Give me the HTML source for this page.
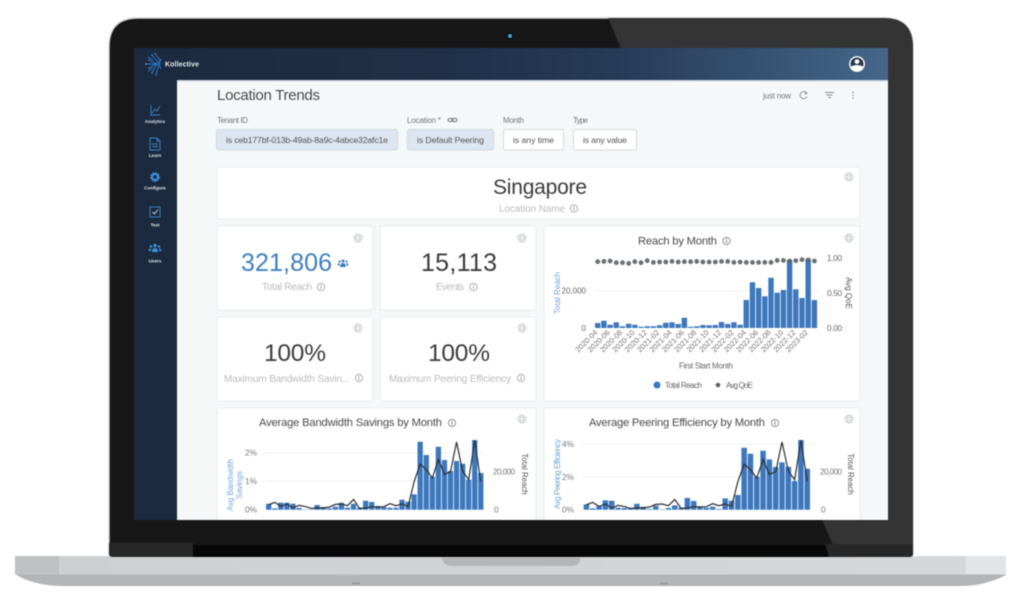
<!DOCTYPE html>
<html><head><meta charset="utf-8"><title>Kollective Location Trends</title>
<style>
html,body{margin:0;padding:0;background:#fff;width:1024px;height:604px;overflow:hidden}
svg{display:block;filter:blur(.5px)}
text{font-family:"Liberation Sans",sans-serif}
</style></head><body>
<svg width="1024" height="604" viewBox="0 0 1024 604" xmlns="http://www.w3.org/2000/svg">
<defs>
<clipPath id="scr"><rect x="134" y="48" width="754" height="472"/></clipPath>
<clipPath id="bez"><path d="M138 18H884Q913 18 913 47V553Q913 557 909 557H113Q109 557 109 553V47Q109 18 138 18Z"/></clipPath>
<linearGradient id="hd" x1="0" x2="1" y1="0" y2="0"><stop offset="0" stop-color="#1b2a3e"/><stop offset=".4" stop-color="#1f3048"/><stop offset=".65" stop-color="#263c58"/><stop offset="1" stop-color="#46678a"/></linearGradient>
<linearGradient id="baseTop" x1="0" x2="1" y1="0" y2="0"><stop offset="0" stop-color="#cdd0d1"/><stop offset="1" stop-color="#d5d8da"/></linearGradient>
<g id="gl" fill="none" stroke="#ccd0d4" stroke-width=".9"><circle r="4"/><ellipse rx="1.8" ry="4"/><path d="M-4 -1.3H4M-4 1.3H4"/></g>
<g id="inf" fill="none" stroke="#777" stroke-width=".8"><circle r="3.6"/><path d="M0 -.6V2" stroke-width="1"/><path d="M0 -2.2V-1.3" stroke-width="1"/></g>
<polyline id="ln" fill="none" stroke="#2c2f33" stroke-width="1.2" vector-effect="non-scaling-stroke" points="0,5 1,7.3 2,3.3 3,5.7 4,1.7 5,4.3 6,3.3 7,1.3 8,1.7 9,1.7 10,2.7 11,5.3 12,5.7 13,4 14,10.3 15,1.3 16,1.7 17,3 18,2.7 19,3 20,6 21,4 22,5.7 23,3.3 24,28 25,45.7 26,40 27,31.7 28,50.3 29,35.3 30,38 31,67.7 32,38.7 33,30 34,69.3 35,28"/>
</defs>

<!-- base -->
<path d="M15 557H1006V575Q985 586 960 586H60Q32 585 15 574Z" fill="#b2b4b5"/>
<rect x="15" y="556" width="991" height="18.5" fill="url(#baseTop)"/>
<rect x="15" y="556" width="44" height="18.5" fill="#bfc0c1"/>
<rect x="966" y="556" width="40" height="18.5" fill="#e2e5e8"/>
<path d="M442 556H580V561Q578 566 572 566H452Q444 566 442 559Z" fill="#b4b5b6"/>
<rect x="352" y="582.5" width="8" height="2" fill="#9a9b9c"/>
<rect x="660" y="582.5" width="8" height="2" fill="#9a9b9c"/>

<!-- bezel -->
<path d="M138 18H884Q913 18 913 47V553Q913 557 909 557H113Q109 557 109 553V47Q109 18 138 18Z" fill="#171717" stroke="#d4d4d4" stroke-width="1.4"/>
<g clip-path="url(#bez)">
<path d="M608 18H913V557H838Z" fill="#343434"/>
<rect x="109" y="545" width="804" height="12" fill="#070707"/>
<path d="M109 543H193V557H109Z" fill="#272727"/>
<path d="M825 544H913V557H829Z" fill="#272727"/>
</g>
<circle cx="510" cy="36" r="3.4" fill="#0b0b0b"/><circle cx="510" cy="36" r="2.1" fill="#3ba7c6"/>

<!-- screen -->
<g clip-path="url(#scr)">
<rect x="134" y="48" width="754" height="472" fill="#f5f7f9"/>
<rect x="134" y="48" width="43" height="472" fill="#1b2a3e"/>
<rect x="134" y="48" width="754" height="32" fill="url(#hd)"/>
<rect x="177" y="80" width="711" height="1.5" fill="#cfd5dc"/>

<!-- logo -->
<g fill="none" stroke="#2f7fd0" stroke-width=".9">
<path d="M146 64H157M149 60L157 64L149 68M152 55L158 62L152 73M155 53.5L160 60L156 75M148 57L153 60M148 71L153 68"/>
<path d="M161 59Q158 64 161 69"/>
</g>
<g fill="#3f8fdc"><circle cx="146" cy="64" r="1"/><circle cx="149" cy="60" r=".8"/><circle cx="149" cy="68" r=".8"/><circle cx="152" cy="55" r=".8"/><circle cx="152" cy="73" r=".8"/><circle cx="155" cy="53.5" r=".8"/><circle cx="156" cy="75" r=".8"/></g>
<text x="165" y="66.5" font-size="7" font-weight="700" fill="#e8edf2" textLength="34">Kollective</text>

<!-- user -->
<circle cx="857" cy="64" r="7.2" fill="#24384f" stroke="#fff" stroke-width="1.4"/>
<circle cx="857" cy="61.6" r="2.4" fill="#fff"/>
<path d="M851 66.5Q857 63.5 863 66.5Q861 71 857 71Q853 71 851 66.5Z" fill="#fff"/>

<!-- sidebar -->
<g fill="none" stroke="#3f86c8" stroke-width=".9">
<path d="M151 105V115H160M152 113L155 109L157 111L160 106"/>
<path d="M150 138H157L160 141V150H150ZM157 138V141H160M152 144H158M152 146.5H158"/>
<rect x="150" y="207" width="10" height="10"/>
<path d="M152.5 212L154.5 214L158 209.5" stroke="#d0dde8"/>
</g>
<circle cx="155" cy="177" r="3" fill="none" stroke="#3f8fd6" stroke-width="2.2"/>
<circle cx="155" cy="177" r="4.4" fill="none" stroke="#3f8fd6" stroke-width="1.2" stroke-dasharray="1.6 1.4"/>
<g fill="#3f8fd6"><circle cx="155" cy="245.5" r="1.7"/><circle cx="151" cy="246.5" r="1.3"/><circle cx="159" cy="246.5" r="1.3"/><path d="M152 252Q152 248 155 248Q158 248 158 252ZM148.5 251Q148.5 248.5 151 248.5L151 251ZM161.5 251Q161.5 248.5 159 248.5L159 251Z"/></g>
<g font-size="4.6" font-weight="700" fill="#dfe6ee" text-anchor="middle">
<text x="155" y="123">Analytics</text><text x="155" y="157">Learn</text><text x="155" y="189.5">Configure</text><text x="155" y="226.5">Test</text><text x="155" y="262.5">Users</text>
</g>

<!-- title row -->
<text x="217" y="100" font-size="15" fill="#4a4a4a" textLength="103">Location Trends</text>
<text x="763" y="98.5" font-size="8" fill="#777" textLength="28">just now</text>
<g fill="none" stroke="#888" stroke-width=".9"><path d="M806.5 93A3.6 3.6 0 1 0 807 96.5"/><path d="M805.5 91.5L807 93.5L804.5 94"/><path d="M825 92.5H834M826.5 95H832.5M828 97.5H831"/></g>
<g fill="#888"><circle cx="853" cy="92.5" r=".7"/><circle cx="853" cy="95.3" r=".7"/><circle cx="853" cy="98" r=".7"/></g>

<!-- filters -->
<g font-size="8" fill="#777"><text x="217" y="123" textLength="31">Tenant ID</text><text x="407" y="123" textLength="34">Location *</text><text x="503" y="123" textLength="21">Month</text><text x="573" y="123" textLength="15">Type</text></g>
<g fill="none" stroke="#777" stroke-width=".9"><rect x="448" y="118.5" width="5" height="3" rx="1.5"/><rect x="452" y="118.5" width="5" height="3" rx="1.5"/></g>
<rect x="216.5" y="129.5" width="181" height="20.5" rx="2" fill="#dce5f0" stroke="#ced8e4"/>
<rect x="407.5" y="129.5" width="86" height="20.5" rx="2" fill="#dce5f0" stroke="#ced8e4"/>
<rect x="503.5" y="129.5" width="60" height="20.5" rx="2" fill="#fff" stroke="#d6dade"/>
<rect x="573.5" y="129.5" width="63" height="20.5" rx="2" fill="#fff" stroke="#d6dade"/>
<g font-size="8.7" fill="#555"><text x="226" y="143" textLength="162">is ceb177bf-013b-49ab-8a9c-4abce32afc1e</text><text x="417" y="143" textLength="67">is Default Peering</text><text x="513" y="143" textLength="41">is any time</text><text x="583" y="143" textLength="44">is any value</text></g>

<!-- cards -->
<g fill="#fff" stroke="#eceff2" stroke-width="1.2">
<rect x="217" y="167" width="643" height="52" rx="2"/>
<rect x="217" y="226" width="156" height="84" rx="2"/>
<rect x="380" y="226" width="156" height="84" rx="2"/>
<rect x="217" y="317" width="156" height="84" rx="2"/>
<rect x="380" y="317" width="156" height="84" rx="2"/>
<rect x="544" y="226" width="316" height="175" rx="2"/>
<rect x="217" y="408" width="319" height="130" rx="2"/>
<rect x="544" y="408" width="316" height="130" rx="2"/>
</g>
<use href="#gl" x="849" y="177"/><use href="#gl" x="358" y="238"/><use href="#gl" x="522" y="238"/><use href="#gl" x="849" y="238"/><use href="#gl" x="358" y="328"/><use href="#gl" x="522" y="328"/><use href="#gl" x="522" y="419"/><use href="#gl" x="849" y="419"/>

<text x="493" y="194" font-size="21" fill="#3c3c3c" textLength="94">Singapore</text>
<text x="499" y="212" font-size="9.8" fill="#bcbcbc" textLength="66">Location Name</text><use href="#inf" x="574" y="208.5" opacity=".7"/>

<text x="241" y="271" font-size="25" fill="#3f7fc1" textLength="91">321,806</text>
<g fill="#3f7fc1"><circle cx="343" cy="261" r="1.5"/><circle cx="339.5" cy="261.5" r="1.1"/><circle cx="346.5" cy="261.5" r="1.1"/><path d="M340 267Q340 263 343 263Q346 263 346 267ZM337.5 265.5Q337.5 263 339.5 263V265.5ZM348.5 265.5Q348.5 263 346.5 263V265.5Z"/></g>
<text x="262" y="290" font-size="10" fill="#bcbcbc" textLength="50">Total Reach</text><use href="#inf" x="321" y="287" opacity=".7"/>
<text x="421" y="271" font-size="25" fill="#3c3c3c" textLength="76">15,113</text>
<text x="436" y="290" font-size="10" fill="#bcbcbc" textLength="28">Events</text><use href="#inf" x="473.5" y="287" opacity=".7"/>
<text x="264" y="361" font-size="24.5" fill="#3c3c3c" textLength="62">100%</text>
<text x="224" y="382" font-size="10" fill="#bcbcbc" textLength="126">Maximum Bandwidth Savin...</text><use href="#inf" x="359" y="378" opacity=".7"/>
<text x="428" y="361" font-size="24.5" fill="#3c3c3c" textLength="62">100%</text>
<text x="389" y="382" font-size="10" fill="#bcbcbc" textLength="122">Maximum Peering Efficiency</text><use href="#inf" x="521" y="378" opacity=".7"/>

<!-- Reach by Month -->
<text x="638" y="244.5" font-size="11.2" fill="#4a4a4a" textLength="79">Reach by Month</text><use href="#inf" x="726.5" y="241"/>
<path d="M594 291H819" stroke="#eef0f2" fill="none"/>
<path stroke="#3d78bd" stroke-width="5.4" fill="none" d="M597.7 328v-5m6.19 5v-7.3m6.19 7.3v-3.3m6.19 3.3v-5.7m6.19 5.7v-1.7m6.19 1.7v-4.3m6.19 4.3v-3.3m6.19 3.3v-1.3m6.19 1.3v-1.7m6.19 1.7v-1.7m6.19 1.7v-2.7m6.19 2.7v-5.3m6.19 5.3v-5.7m6.19 5.7v-4m6.19 4v-10.3m6.19 10.3v-1.3m6.19 1.3v-1.7m6.19 1.7v-3m6.19 3v-2.7m6.19 2.7v-3m6.19 3v-6m6.19 6v-4m6.19 4v-5.7m6.19 5.7v-3.3m6.19 3.3v-28m6.19 28v-45.7m6.19 45.7v-40m6.19 40v-31.7m6.19 31.7v-50.3m6.19 50.3v-35.3m6.19 35.3v-38m6.19 38v-67.7m6.19 67.7v-38.7m6.19 38.7v-30m6.19 30v-69.3m6.19 69.3v-28"/>
<path stroke="#5f6368" stroke-opacity=".92" stroke-width="4.8" stroke-linecap="round" fill="none" d="M597.7 261.7h.01M603.9 261.4h.01M610.1 261h.01M616.3 262.7h.01M622.5 262.7h.01M628.7 263.4h.01M634.8 261.7h.01M641 262.7h.01M647.2 260.7h.01M653.4 262.4h.01M659.6 262h.01M665.8 262h.01M672 261.4h.01M678.2 262h.01M684.4 261.7h.01M690.6 261.7h.01M696.7 261.4h.01M702.9 262h.01M709.1 262h.01M715.3 262h.01M721.5 261.4h.01M727.7 261.4h.01M733.9 262.4h.01M740.1 262h.01M746.3 262.4h.01M752.5 262.4h.01M758.6 262.4h.01M764.8 262.4h.01M771 262.4h.01M777.2 260.4h.01M783.4 260.4h.01M789.6 261h.01M795.8 260.7h.01M802 259.7h.01M808.2 260h.01M814.4 261h.01"/>
<g font-size="7.6" fill="#777">
<text x="586" y="293.5" text-anchor="end" fill="#666" font-size="8">20,000</text><text x="586" y="331" text-anchor="end" fill="#666" font-size="8">0</text>
<text x="827" y="261" font-size="8.2" textLength="15" fill="#666">1.00</text><text x="827" y="296" font-size="8.2" textLength="15" fill="#666">0.50</text><text x="827" y="331" font-size="8.2" textLength="15" fill="#666">0.00</text>
<text transform="rotate(-45 598 333)" x="598" y="333" text-anchor="end">2020-04</text>
<text transform="rotate(-45 610.4 333)" x="610.4" y="333" text-anchor="end">2020-06</text>
<text transform="rotate(-45 622.8 333)" x="622.8" y="333" text-anchor="end">2020-08</text>
<text transform="rotate(-45 635.1 333)" x="635.1" y="333" text-anchor="end">2020-10</text>
<text transform="rotate(-45 647.5 333)" x="647.5" y="333" text-anchor="end">2020-12</text>
<text transform="rotate(-45 659.9 333)" x="659.9" y="333" text-anchor="end">2021-02</text>
<text transform="rotate(-45 672.3 333)" x="672.3" y="333" text-anchor="end">2021-04</text>
<text transform="rotate(-45 684.7 333)" x="684.7" y="333" text-anchor="end">2021-06</text>
<text transform="rotate(-45 697 333)" x="697" y="333" text-anchor="end">2021-08</text>
<text transform="rotate(-45 709.4 333)" x="709.4" y="333" text-anchor="end">2021-10</text>
<text transform="rotate(-45 721.8 333)" x="721.8" y="333" text-anchor="end">2021-12</text>
<text transform="rotate(-45 734.2 333)" x="734.2" y="333" text-anchor="end">2022-02</text>
<text transform="rotate(-45 746.6 333)" x="746.6" y="333" text-anchor="end">2022-04</text>
<text transform="rotate(-45 758.9 333)" x="758.9" y="333" text-anchor="end">2022-06</text>
<text transform="rotate(-45 771.3 333)" x="771.3" y="333" text-anchor="end">2022-08</text>
<text transform="rotate(-45 783.7 333)" x="783.7" y="333" text-anchor="end">2022-10</text>
<text transform="rotate(-45 796.1 333)" x="796.1" y="333" text-anchor="end">2022-12</text>
<text transform="rotate(-45 808.5 333)" x="808.5" y="333" text-anchor="end">2023-02</text>
<text x="679" y="368.5" textLength="54" fill="#666" font-size="8">First Start Month</text>
<text x="665" y="388" textLength="37" fill="#666" font-size="8">Total Reach</text>
<text x="726" y="388" textLength="27" fill="#666" font-size="8">Avg QoE</text>
</g>
<text transform="translate(560 293) rotate(-90)" text-anchor="middle" font-size="8" fill="#6fa6dc">Total Reach</text>
<text transform="translate(846 293) rotate(90)" text-anchor="middle" font-size="8" fill="#555">Avg QoE</text>
<circle cx="657" cy="385" r="3.5" fill="#3d78bd"/><circle cx="718" cy="385" r="2.3" fill="#5f6368"/>

<!-- Average Bandwidth -->
<text x="259" y="426" font-size="11.2" fill="#4a4a4a" textLength="183">Average Bandwidth Savings by Month</text><use href="#inf" x="452" y="423"/>
<path d="M265 452.7H485M265 481H485" stroke="#eef0f2" fill="none"/>
<path stroke="#3d78bd" stroke-width="5.3" fill="none" d="M268.7 509.7v-6m6.06 6v-1.3m6.06 1.3v-7m6.06 7v-7m6.06 7v-6m6.06 6v-1.7m6.06 1.7v-.3m6.06 .3v-.3m6.06 .3v-4.7m6.06 4.7v-2.7m6.06 2.7v-1.3m6.06 1.3v-3m6.06 3v-7m6.06 7v-2m6.06 2v-6m6.06 6v-2m6.06 2v-9m6.06 9v-7.7m6.06 7.7v-3.7m6.06 3.7v-2.7m6.06 2.7v-2m6.06 2v-2m6.06 2v-10m6.06 10v-8m6.06 8v-15.3m6.06 15.3v-68m6.06 68v-54.7m6.06 54.7v-33m6.06 33v-63m6.06 63v-49.7m6.06 49.7v-38.7m6.06 38.7v-48.7m6.06 48.7v-46m6.06 46v-30m6.06 30v-69.7m6.06 69.7v-36.7"/>
<use href="#ln" transform="translate(268.7 509.7) scale(6.06 -1)"/>
<g font-size="8.3" fill="#777">
<text x="257" y="455.5" text-anchor="end">2%</text><text x="257" y="484" text-anchor="end">1%</text><text x="257" y="512.5" text-anchor="end">0%</text>
<text x="493" y="474.5" font-size="8" textLength="22">20,000</text><text x="494" y="512.5">0</text>
</g>
<text transform="translate(522 474) rotate(90)" text-anchor="middle" font-size="7.8" fill="#555">Total Reach</text>
<text transform="translate(233 485) rotate(-90)" text-anchor="middle" font-size="7.8" fill="#6fa6dc">Avg Bandwidth</text>
<text transform="translate(242 485) rotate(-90)" text-anchor="middle" font-size="7.8" fill="#6fa6dc">Savings</text>
<g font-size="7.6" fill="#777">
<text transform="rotate(-45 270 523)" x="270" y="523" text-anchor="end">2020-04</text><text transform="rotate(-45 282 523)" x="282" y="523" text-anchor="end">2020-06</text><text transform="rotate(-45 294 523)" x="294" y="523" text-anchor="end">2020-08</text><text transform="rotate(-45 306 523)" x="306" y="523" text-anchor="end">2020-10</text><text transform="rotate(-45 318 523)" x="318" y="523" text-anchor="end">2020-12</text><text transform="rotate(-45 330 523)" x="330" y="523" text-anchor="end">2021-02</text><text transform="rotate(-45 343 523)" x="343" y="523" text-anchor="end">2021-04</text><text transform="rotate(-45 355 523)" x="355" y="523" text-anchor="end">2021-06</text><text transform="rotate(-45 367 523)" x="367" y="523" text-anchor="end">2021-08</text><text transform="rotate(-45 379 523)" x="379" y="523" text-anchor="end">2021-10</text><text transform="rotate(-45 391 523)" x="391" y="523" text-anchor="end">2021-12</text><text transform="rotate(-45 403 523)" x="403" y="523" text-anchor="end">2022-02</text><text transform="rotate(-45 415 523)" x="415" y="523" text-anchor="end">2022-04</text><text transform="rotate(-45 427 523)" x="427" y="523" text-anchor="end">2022-06</text><text transform="rotate(-45 440 523)" x="440" y="523" text-anchor="end">2022-08</text><text transform="rotate(-45 452 523)" x="452" y="523" text-anchor="end">2022-10</text><text transform="rotate(-45 464 523)" x="464" y="523" text-anchor="end">2022-12</text><text transform="rotate(-45 476 523)" x="476" y="523" text-anchor="end">2023-02</text>
</g>

<!-- Average Peering -->
<text x="589" y="426" font-size="11.2" fill="#4a4a4a" textLength="176">Average Peering Efficiency by Month</text><use href="#inf" x="775" y="423"/>
<path d="M582 444.3H812M582 477H812" stroke="#eef0f2" fill="none"/>
<path stroke="#3d78bd" stroke-width="5.5" fill="none" d="M586.4 509.7v-5.3m6.31 5.3v-1.3m6.31 1.3v-3.3m6.31 3.3v-9.3m6.31 9.3v-9m6.31 9v-2m6.31 2v-1.7m6.31 1.7v-1.3m6.31 1.3v-6m6.31 6v-3m6.31 3v-.7m6.31 .7v-4m6.31 4v-.3m6.31 .3v-1.7m6.31 1.7v-4.3m6.31 4.3v-2m6.31 2v-11.7m6.31 11.7v-8.7m6.31 8.7v-3.3m6.31 3.3v-2m6.31 2v-3m6.31 3v-.7m6.31 .7v-11.3m6.31 11.3v-9m6.31 9v-14.7m6.31 14.7v-62m6.31 62v-56m6.31 56v-33m6.31 33v-59m6.31 59v-50.3m6.31 50.3v-42.7m6.31 42.7v-47.3m6.31 47.3v-43m6.31 43v-28.7m6.31 28.7v-69.7m6.31 69.7v-41"/>
<use href="#ln" transform="translate(586.4 509.7) scale(6.31 -1)"/>
<g font-size="8.3" fill="#777">
<text x="574" y="447" text-anchor="end">4%</text><text x="574" y="480" text-anchor="end">2%</text><text x="574" y="512.5" text-anchor="end">0%</text>
<text x="820" y="474.5" font-size="8" textLength="22">20,000</text><text x="821" y="512.5">0</text>
</g>
<text transform="translate(848 474) rotate(90)" text-anchor="middle" font-size="7.8" fill="#555">Total Reach</text>
<text transform="translate(560 474) rotate(-90)" text-anchor="middle" font-size="7.8" fill="#6fa6dc" textLength="70">Avg Peering Efficiency</text>
<g font-size="7.6" fill="#777">
<text transform="rotate(-45 588 523)" x="588" y="523" text-anchor="end">2020-04</text><text transform="rotate(-45 601 523)" x="601" y="523" text-anchor="end">2020-06</text><text transform="rotate(-45 613 523)" x="613" y="523" text-anchor="end">2020-08</text><text transform="rotate(-45 626 523)" x="626" y="523" text-anchor="end">2020-10</text><text transform="rotate(-45 639 523)" x="639" y="523" text-anchor="end">2020-12</text><text transform="rotate(-45 651 523)" x="651" y="523" text-anchor="end">2021-02</text><text transform="rotate(-45 664 523)" x="664" y="523" text-anchor="end">2021-04</text><text transform="rotate(-45 676 523)" x="676" y="523" text-anchor="end">2021-06</text><text transform="rotate(-45 689 523)" x="689" y="523" text-anchor="end">2021-08</text><text transform="rotate(-45 702 523)" x="702" y="523" text-anchor="end">2021-10</text><text transform="rotate(-45 714 523)" x="714" y="523" text-anchor="end">2021-12</text><text transform="rotate(-45 727 523)" x="727" y="523" text-anchor="end">2022-02</text><text transform="rotate(-45 739 523)" x="739" y="523" text-anchor="end">2022-04</text><text transform="rotate(-45 752 523)" x="752" y="523" text-anchor="end">2022-06</text><text transform="rotate(-45 765 523)" x="765" y="523" text-anchor="end">2022-08</text><text transform="rotate(-45 777 523)" x="777" y="523" text-anchor="end">2022-10</text><text transform="rotate(-45 790 523)" x="790" y="523" text-anchor="end">2022-12</text><text transform="rotate(-45 802 523)" x="802" y="523" text-anchor="end">2023-02</text>
</g>
</g>
</svg>
</body></html>
